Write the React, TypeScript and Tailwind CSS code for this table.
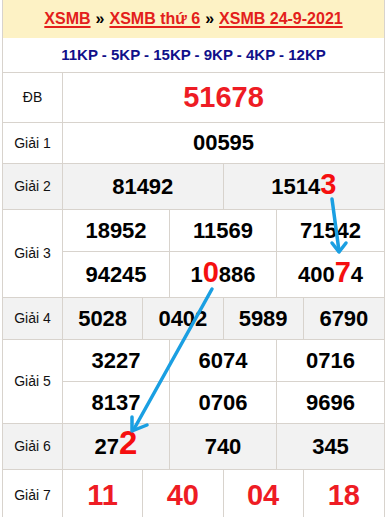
import React from 'react';

const line = 'border-[#d8d3cd]';

function Label({ text }: { text: string }) {
  return (
    <div className={`w-[60px] shrink-0 border-r ${line} flex items-center justify-center text-[14px] text-[#111]`}>
      {text}
    </div>
  );
}

function Num({ value, hi, big = 'text-[29px]' }: { value: string; hi?: [string, string, string]; big?: string }) {
  // hi = [before, red digit, after]
  return (
    <div className="flex items-center justify-center font-bold leading-none text-black text-[22px]">
      {hi ? (
        <span>
          {hi[0]}
          <span className={`text-[#f50f0f] ${big} leading-[0]`}>{hi[1]}</span>
          {hi[2]}
        </span>
      ) : (
        value
      )}
    </div>
  );
}

function Row({
  label,
  gray,
  h,
  children,
  bottom = true,
}: {
  label: string;
  gray?: boolean;
  h: string;
  children: React.ReactNode;
  bottom?: boolean;
}) {
  return (
    <div className={`flex ${h} ${bottom ? `border-b ${line}` : ''} ${gray ? 'bg-[#f2f2f2]' : 'bg-white'}`}>
      <Label text={label} />
      <div className="flex-1 flex flex-col">{children}</div>
    </div>
  );
}

function Cols({ n, h, items, last }: { n: 2 | 3 | 4; h: string; items: React.ReactNode[]; last?: boolean }) {
  const cols = { 2: 'grid-cols-2', 3: 'grid-cols-3', 4: 'grid-cols-4' }[n];
  return (
    <div className={`grid ${cols} ${h} ${last ? '' : `border-b ${line}`} divide-x divide-[#d8d3cd]`}>
      {items.map((it, i) => (
        <div key={i} className="flex items-center justify-center">
          {it}
        </div>
      ))}
    </div>
  );
}

export default function App() {
  const link = 'text-[#e3201b] underline underline-offset-2 decoration-[1.5px]';
  return (
    <div className="relative w-[387px] h-[517px] overflow-hidden bg-white font-['Liberation_Sans',Arial,sans-serif]">
      <div className={`mx-[2px] border-x ${line}`}>
        {/* Header */}
        <div className="h-[38px] bg-[#fdf2c5] flex items-center justify-center text-[16px] font-bold text-black">
          <span className={link}>XSMB</span>
          <span className="mx-[5px]">»</span>
          <span className={link}>XSMB thứ 6</span>
          <span className="mx-[5px]">»</span>
          <span className={link}>XSMB 24-9-2021</span>
        </div>

        {/* KP */}
        <div className={`h-[35px] border-b ${line} flex items-center justify-center text-[15px] font-bold text-[#10108a]`}>
          11KP - 5KP - 15KP - 9KP - 4KP - 12KP
        </div>

        <Row label="ĐB" h="h-[50px]">
          <div className="flex-1 flex items-center justify-center text-[29px] font-bold text-[#ee1c24] leading-none">51678</div>
        </Row>

        <Row label="Giải 1" h="h-[41px]">
          <div className="flex-1 flex items-center justify-center">
            <Num value="00595" />
          </div>
        </Row>

        <Row label="Giải 2" gray h="h-[46px]">
          <Cols n={2} h="h-full" last items={[<Num value="81492" />, <Num value="15143" hi={['1514', '3', '']} />]} />
        </Row>

        <Row label="Giải 3" h="h-[88px]">
          <Cols n={3} h="h-[42px]" items={[<Num value="18952" />, <Num value="11569" />, <Num value="71542" />]} />
          <Cols
            n={3}
            h="h-[45px]"
            last
            items={[<Num value="94245" />, <Num value="10886" hi={['1', '0', '886']} />, <Num value="40074" hi={['400', '7', '4']} />]}
          />
        </Row>

        <Row label="Giải 4" gray h="h-[42px]">
          <Cols n={4} h="h-full" last items={[<Num value="5028" />, <Num value="0402" />, <Num value="5989" />, <Num value="6790" />]} />
        </Row>

        <Row label="Giải 5" h="h-[84px]">
          <Cols n={3} h="h-[42px]" items={[<Num value="3227" />, <Num value="6074" />, <Num value="0716" />]} />
          <Cols n={3} h="h-[41px]" last items={[<Num value="8137" />, <Num value="0706" />, <Num value="9696" />]} />
        </Row>

        <Row label="Giải 6" gray h="h-[46px]">
          <Cols
            n={3}
            h="h-full"
            last
            items={[<Num value="272" hi={['27', '2', '']} big="text-[33px]" />, <Num value="740" />, <Num value="345" />]}
          />
        </Row>

        <Row label="Giải 7" h="h-[50px]" bottom={false}>
          <Cols
            n={4}
            h="h-full"
            last
            items={['11', '40', '04', '18'].map((v) => (
              <span className="text-[29px] font-bold text-[#ee1c24] leading-none">{v}</span>
            ))}
          />
        </Row>
      </div>

      {/* hand-drawn arrows */}
      <svg className="absolute inset-0 pointer-events-none" width="387" height="517" viewBox="0 0 387 517">
        <g fill="none" stroke="#1a9fe2" strokeWidth="3.5" strokeLinecap="round" strokeLinejoin="round">
          <path d="M332 199 L339 251" />
          <path d="M332 243 L339 252 L346 243" />
          <path d="M212 289 L134 429" />
          <path d="M132 417 L132 431 L147 425" />
        </g>
      </svg>
    </div>
  );
}
